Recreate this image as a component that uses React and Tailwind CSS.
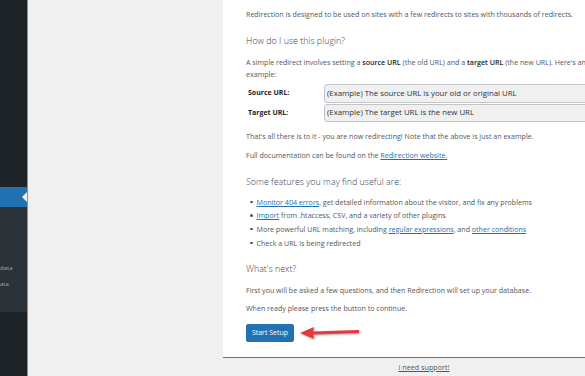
import React from 'react';

const body = "text-[7.1px] leading-[12px] text-[#50575e] whitespace-nowrap";
const heading = "text-[8.9px] leading-[14px] font-light text-[#3c434a] whitespace-nowrap";
const link = "text-[#2271b1] underline";
const strong = "font-semibold text-[#1d2327]";

const Bullet = ({ children }) => (
  <li className="flex items-center h-[13.7px] pl-[4px]">
    <span className="w-[2.5px] h-[2.5px] rounded-full bg-[#50575e] mr-[4px]"></span>
    <span className="text-[7.1px] text-[#50575e] whitespace-nowrap">{children}</span>
  </li>
);

const App = () => {
  return (
    <div
      className="w-[585px] h-[376px] flex overflow-hidden bg-[#f0f0f1]"
      style={{ fontFamily: '"Open Sans", "Noto Sans", sans-serif' }}
    >
      {/* Admin sidebar (mostly scrolled out of view) */}
      <div className="w-[28px] shrink-0 flex flex-col bg-[#1d2327] border-r border-[#8c8f94]">
        <div className="h-[187px]"></div>
        <div className="h-[20px] bg-[#2271b1] relative">
          <div className="absolute right-0 top-[5px] w-0 h-0 border-y-[5px] border-y-transparent border-r-[5px] border-r-[#f0f0f1]"></div>
        </div>
        <div className="h-[105px] bg-[#2c3338] flex flex-col items-start pt-[55px] gap-[4px]">
          <span className="text-[6px] leading-[12px] text-[#a7aaad] whitespace-nowrap">data</span>
          <span className="text-[6px] leading-[12px] text-[#a7aaad] whitespace-nowrap">ata</span>
        </div>
      </div>

      {/* Content area */}
      <div className="flex-1 pl-[195px]">
        <div className="w-[402px] shrink-0">
          <div className="bg-white h-[358px] border-b border-[#d54e21] px-[23px] pt-[8px]">
            <p className={body}>
              Redirection is designed to be used on sites with a few redirects to sites with thousands of redirects.
            </p>

            <h2 className={`${heading} mt-[14px]`}>How do I use this plugin?</h2>

            <p className={`${body} mt-[8px]`}>
              A simple redirect involves setting a <span className={strong}>source URL</span> (the old URL) and a <span className={strong}>target URL</span> (the new URL). Here's an
              <br />
              example:
            </p>

            <div className="mt-[4px] flex flex-col gap-[1px]">
              <div className="flex items-center h-[19px]">
                <span className="w-[78px] pl-[2px] text-[7px] font-bold text-[#1d2327]">Source URL:</span>
                <div className="flex-1 h-full flex items-center px-[2px] bg-[#f0f0f1] border border-[#c3c4c7] rounded-[3px] text-[7.8px] text-[#2c3338] whitespace-nowrap">
                  (Example) The source URL is your old or original URL
                </div>
              </div>
              <div className="flex items-center h-[18px]">
                <span className="w-[78px] pl-[2px] text-[7px] font-bold text-[#1d2327]">Target URL:</span>
                <div className="flex-1 h-full flex items-center px-[2px] bg-[#f0f0f1] border border-[#c3c4c7] rounded-[3px] text-[7.8px] text-[#2c3338] whitespace-nowrap">
                  (Example) The target URL is the new URL
                </div>
              </div>
            </div>

            <p className={`${body} mt-[8px]`}>
              That's all there is to it - you are now redirecting! Note that the above is just an example.
            </p>
            <p className={`${body} mt-[7px]`}>
              Full documentation can be found on the <span className={link}>Redirection website.</span>
            </p>

            <h2 className={`${heading} mt-[14px]`}>Some features you may find useful are:</h2>

            <ul className="mt-[6px]">
              <Bullet><span className={link}>Monitor 404 errors</span>, get detailed information about the visitor, and fix any problems</Bullet>
              <Bullet><span className={link}>Import</span> from .htaccess, CSV, and a variety of other plugins</Bullet>
              <Bullet>More powerful URL matching, including <span className={link}>regular expressions</span>, and <span className={link}>other conditions</span></Bullet>
              <Bullet>Check a URL is being redirected</Bullet>
            </ul>

            <h2 className={`${heading} mt-[12px]`}>What's next?</h2>

            <p className={`${body} mt-[8px]`}>
              First you will be asked a few questions, and then Redirection will set up your database.
            </p>
            <p className={`${body} mt-[6px]`}>When ready please press the button to continue.</p>

            <div className="mt-[10px] flex items-center">
              <button className="h-[18px] w-[48px] bg-[#2271b1] border border-[#2271b1] rounded-[2px] text-white text-[7px] whitespace-nowrap">
                Start Setup
              </button>
              <svg width="62" height="16" viewBox="0 0 62 16" className="ml-[5px] drop-shadow-[1px_1px_1px_rgba(0,0,0,0.35)]">
                <polygon points="1,8 15,2 14,6.5 60,5 60,8 14,9.5 15,14" fill="#e8383d" />
              </svg>
            </div>
          </div>

          <div className="h-[18px] flex items-center justify-center">
            <span className="text-[7.2px] text-[#50575e] underline whitespace-nowrap">I need support!</span>
          </div>
        </div>
      </div>
    </div>
  );
};

export default App;
